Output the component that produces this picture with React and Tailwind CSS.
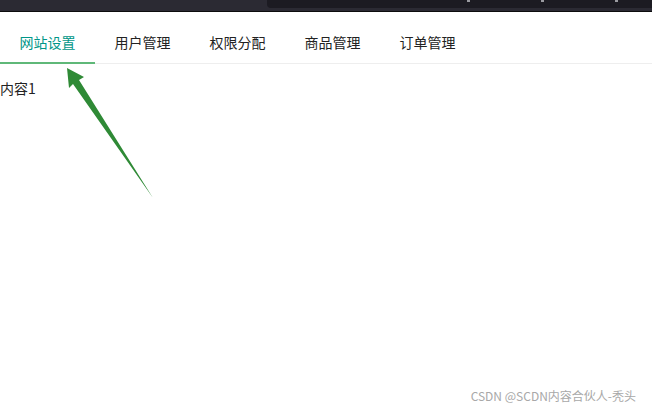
import React, { useState } from "react";

const tabs = ["网站设置", "用户管理", "权限分配", "商品管理", "订单管理"];

const App = () => {
  const [active, setActive] = useState(0);

  return (
    <div
      className="relative flex flex-col min-h-[414px] bg-white text-[#222]"
      style={{ fontFamily: '"Noto Sans CJK SC", "Noto Sans", sans-serif' }}
    >
      {/* Top browser strip */}
      <div className="flex h-[12px] bg-[#2b2a33] border-b border-[#0c0c0d]">
        <div className="w-[267px]" />
        <div className="flex flex-1 h-[8px] bg-[#1c1b22] rounded-bl-[4px] pl-[200px] gap-[71px]">
          <span className="w-[3px] h-[2px] bg-[#9a9aa0]" />
          <span className="w-[3px] h-[2px] bg-[#9a9aa0]" />
          <span className="w-[3px] h-[2px] bg-[#9a9aa0]" />
        </div>
      </div>

      {/* Tabs */}
      <div className="mt-[11px]">
        <ul className="flex h-[41px] border-b border-[#eeeeee]">
          {tabs.map((t, i) => (
            <li
              key={t}
              onClick={() => setActive(i)}
              className={`relative w-[95px] h-[40px] leading-[39px] text-center text-[14px] cursor-pointer ${
                active === i ? "text-[#009688]" : "text-[#222]"
              }`}
            >
              {t}
              {active === i && (
                <span className="absolute left-0 right-0 -bottom-px h-[2px] bg-[#5fb878]" />
              )}
            </li>
          ))}
        </ul>

        <div className="pt-[14px] text-[14px] leading-[20px]">
          内容{active + 1}
        </div>
      </div>

      {/* Watermark */}
      <div className="mt-auto flex justify-end pr-[16px] pb-[10px] text-[12px] leading-[16px] text-[#a8a8a8]">
        CSDN @SCDN内容合伙人-秃头
      </div>

      {/* Annotation arrow */}
      <svg
        className="absolute left-0 top-0 pointer-events-none"
        width="652"
        height="414"
      >
        <polygon
          points="67,68 84,77 79,80 153,198 73,84 69,88"
          fill="#2f8a36"
        />
      </svg>
    </div>
  );
};

export default App;
